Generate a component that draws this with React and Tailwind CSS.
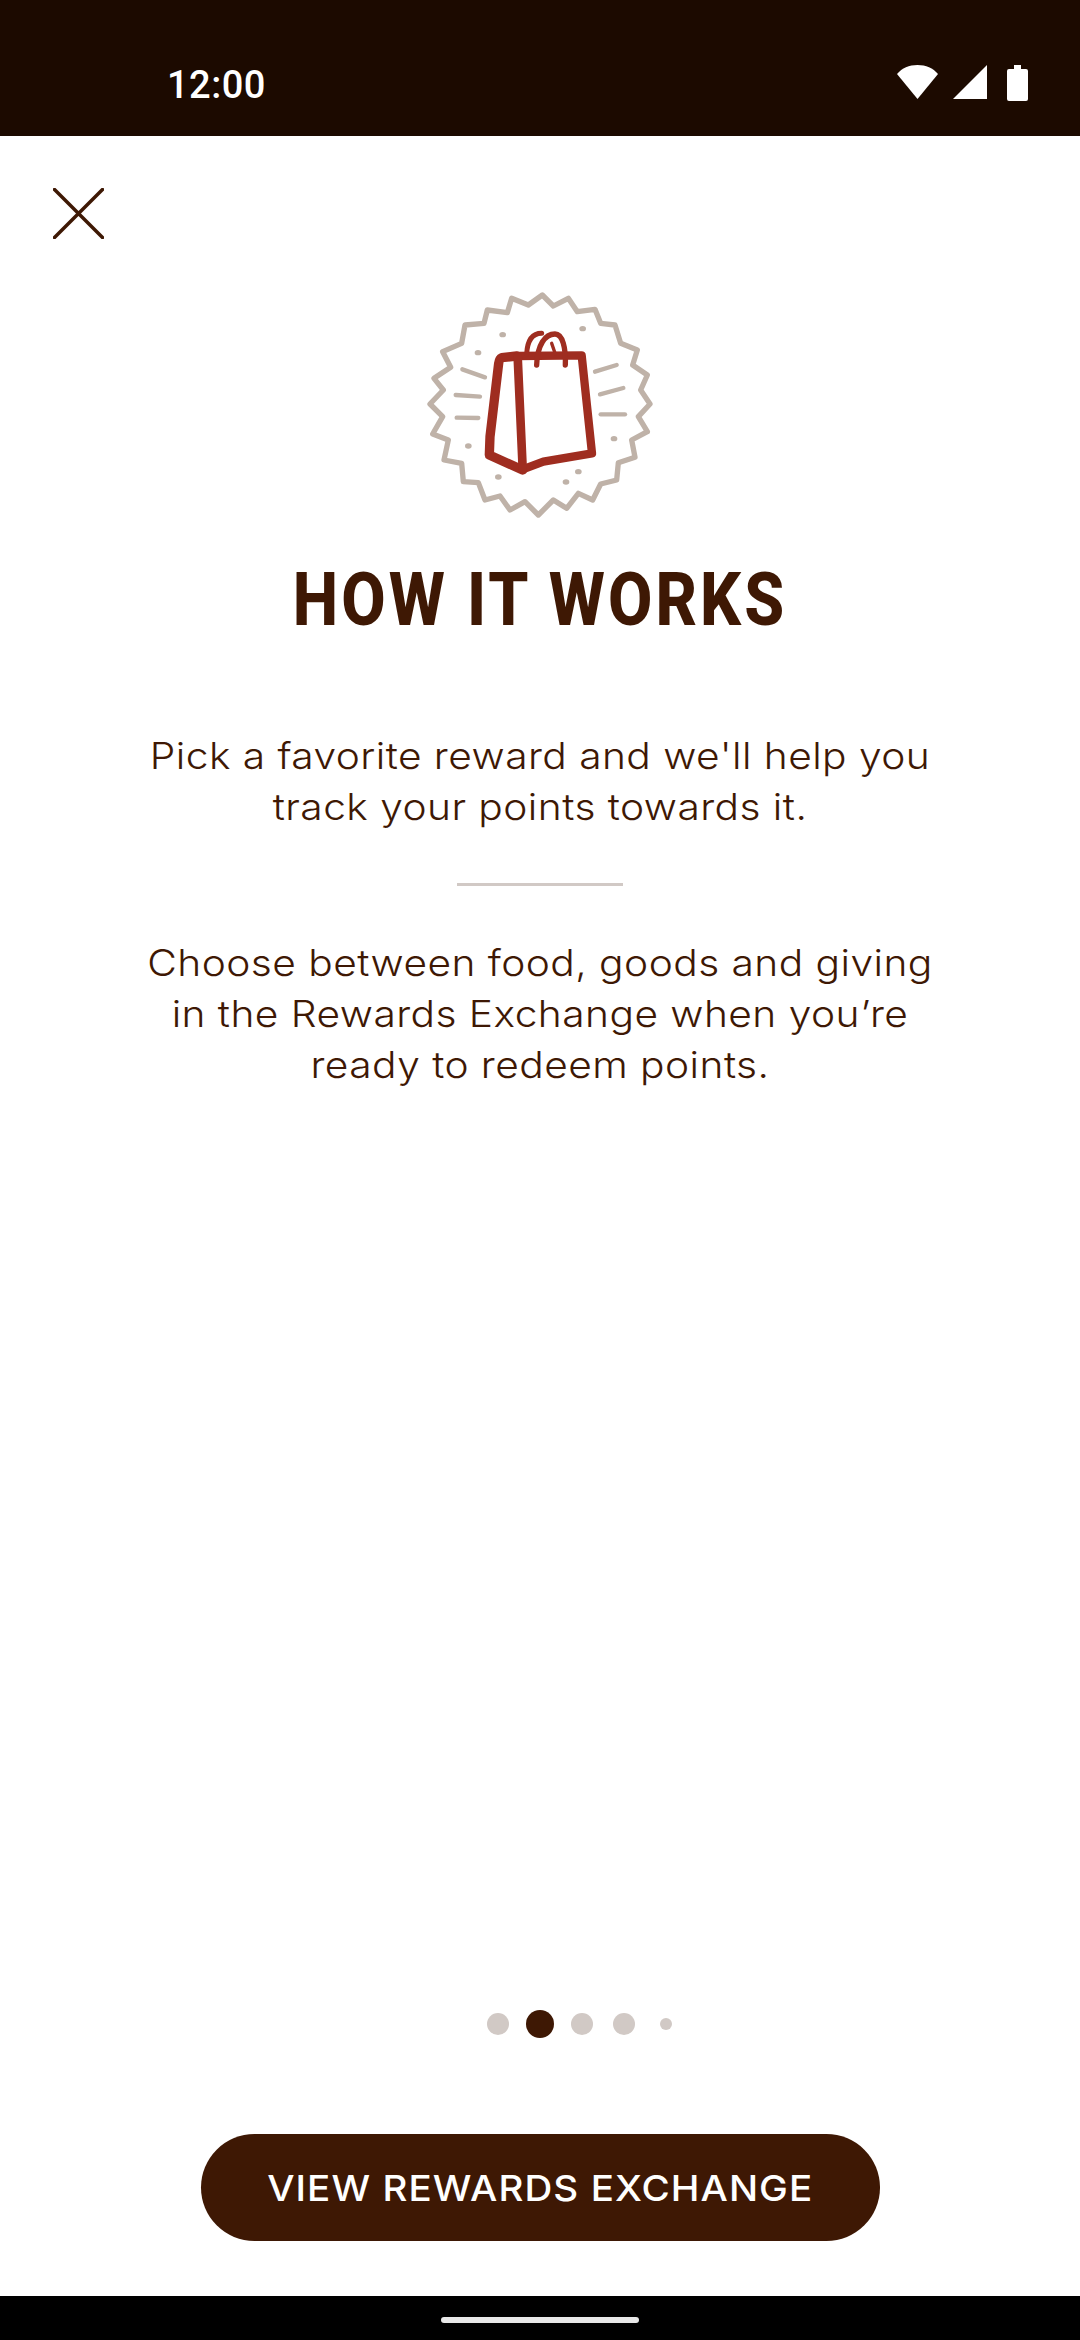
import { Fragment } from 'react';

const BODY_FONT = 'font-["Inter",sans-serif]';

// outline of the scalloped badge
const BADGE_POINTS =
  '397,45 430,78 475,55 502,95 555,88 572,130 615,135 632,190 682,210 668,255 712,285 692,330 720,372 685,410 712,455 665,480 675,532 625,548 620,600 572,612 548,660 505,640 470,685 430,660 385,705 345,665 300,690 270,648 225,660 205,608 160,605 155,550 102,540 115,480 68,462 98,410 60,372 100,330 72,295 122,262 98,215 155,190 165,135 222,130 232,90 292,98 305,55 355,75';

const RAYS = [
  'M157 268 L225 292',
  'M137 345 L210 350',
  'M140 413 L205 414',
  'M555 275 L620 255',
  'M570 343 L640 324',
  'M572 403 L645 403',
];

const SPECKS = [
  [278, 164],
  [518, 146],
  [204, 218],
  [175, 498],
  [612, 476],
  [265, 591],
  [505, 575],
  [468, 606],
];

function RewardBadge() {
  return (
    <svg viewBox="0 0 780 750" className="w-[260px] h-[250px]" fill="none" strokeLinecap="round" strokeLinejoin="round">
      <polygon points={BADGE_POINTS} stroke="#bfb2a8" strokeWidth="16" />
      {RAYS.map((d) => (
        <path key={d} d={d} stroke="#bfb2a8" strokeWidth="13" />
      ))}
      {SPECKS.map(([cx, cy]) => (
        <ellipse key={cx} cx={cx} cy={cy} rx="10" ry="8" fill="#bfb2a8" />
      ))}
      <g stroke="#9f2d20">
        <path d="M320 228 L275 233 Q268 236 266 250 L240 470 L238 525 L338 570" strokeWidth="28" />
        <path d="M322 228 L515 226 L546 520 L400 545 L338 568" strokeWidth="25" />
        <path d="M323 230 L338 565" strokeWidth="26" />
        <path d="M395 160 C365 160 352 185 350 222" strokeWidth="15" />
        <path d="M380 255 C382 195 405 162 435 162 C458 162 468 205 466 255" strokeWidth="16" />
        <path d="M425 190 L436 222" strokeWidth="10" />
      </g>
    </svg>
  );
}

function StatusBar() {
  return (
    <div className="h-[136px] bg-[#1c0a00] flex items-start justify-between pl-[167px] pr-[52px] pt-[62px]">
      <span className="text-white text-[38px] leading-[46px] font-medium tracking-[0.5px] font-['Roboto',sans-serif]">12:00</span>
      <div className="flex items-start gap-[15px] pt-[3px]">
        <svg viewBox="0 0 41 34" className="w-[41px] h-[34px]" fill="#fff">
          <path d="M20.5 34 L0 9 C5 3 12 0 20.5 0 C29 0 36 3 41 9 Z" />
        </svg>
        <svg viewBox="0 0 34 34" className="w-[34px] h-[34px]" fill="#fff">
          <path d="M34 0 V34 H0 Z" />
        </svg>
        <svg viewBox="0 0 21 36" className="w-[21px] h-[36px] ml-[5px]" fill="#fff">
          <path d="M7 0 H14 V4 H19 Q21 4 21 6 V34 Q21 36 19 36 H2 Q0 36 0 34 V6 Q0 4 2 4 H7 Z" />
        </svg>
      </div>
    </div>
  );
}

function PageDots({ active }) {
  const sizes = ['w-[22px] h-[22px]', 'w-[22px] h-[22px]', 'w-[22px] h-[22px]', 'w-[22px] h-[22px]', 'w-[12px] h-[12px]'];
  return (
    <div className="flex justify-center items-center h-[28px] pl-[84px]">
      {sizes.map((size, i) => (
        <div key={i} className="w-[42px] flex justify-center">
          {i === active ? (
            <div className="w-[28px] h-[28px] rounded-full bg-[#3e1804]" />
          ) : (
            <div className={`${size} rounded-full bg-[#d1c9c5]`} />
          )}
        </div>
      ))}
    </div>
  );
}

const PARAGRAPHS = [
  ['Pick a favorite reward and we\'ll help you', 'track your points towards it.'],
  ['Choose between food, goods and giving', 'in the Rewards Exchange when you’re', 'ready to redeem points.'],
];

export default function App() {
  return (
    <div className="w-[1080px] h-[2340px] flex flex-col bg-white overflow-hidden">
      <StatusBar />
      <div className="flex-1 flex flex-col">
        <div className="pl-[53px] pt-[52px] pb-[41px]">
          <svg viewBox="0 0 51 51" className="w-[51px] h-[51px]" stroke="#3e1804" strokeWidth="3.5" strokeLinecap="round">
            <path d="M1.5 1.5 L49.5 49.5 M49.5 1.5 L1.5 49.5" />
          </svg>
        </div>
        <div className="flex justify-center">
          <RewardBadge />
        </div>
        <h1 className="mt-[28px] text-center text-[#3e1804] text-[74px] leading-[84px] font-extrabold tracking-[3.5px] scale-x-[0.87] font-['Roboto',sans-serif]">
          HOW IT WORKS
        </h1>
        <div className={`mt-[88px] text-center text-[#3e1804] text-[37px] leading-[51px] font-light tracking-[0.4px] ${BODY_FONT}`}>
          {PARAGRAPHS.map((lines, i) => (
            <Fragment key={i}>
              {i > 0 && <div className="w-[166px] h-[3px] bg-[#d1c9c5] mx-auto my-[51px]" />}
              <p className="scale-x-[1.1]">
                {lines.map((line) => (
                  <span key={line} className="block">
                    {line}
                  </span>
                ))}
              </p>
            </Fragment>
          ))}
        </div>
        <div className="mt-auto">
          <PageDots active={1} />
        </div>
        <div className="flex justify-center mt-[96px] mb-[55px]">
          <button className={`w-[679px] h-[107px] rounded-full bg-[#3e1804] text-white text-[36px] font-medium tracking-[1px] ${BODY_FONT}`}>
            <span className="inline-block scale-x-[1.07]">VIEW REWARDS EXCHANGE</span>
          </button>
        </div>
      </div>
      <div className="h-[44px] bg-black flex justify-center pt-[21px]">
        <div className="w-[198px] h-[6px] rounded-full bg-[#e8e8e8]" />
      </div>
    </div>
  );
}
